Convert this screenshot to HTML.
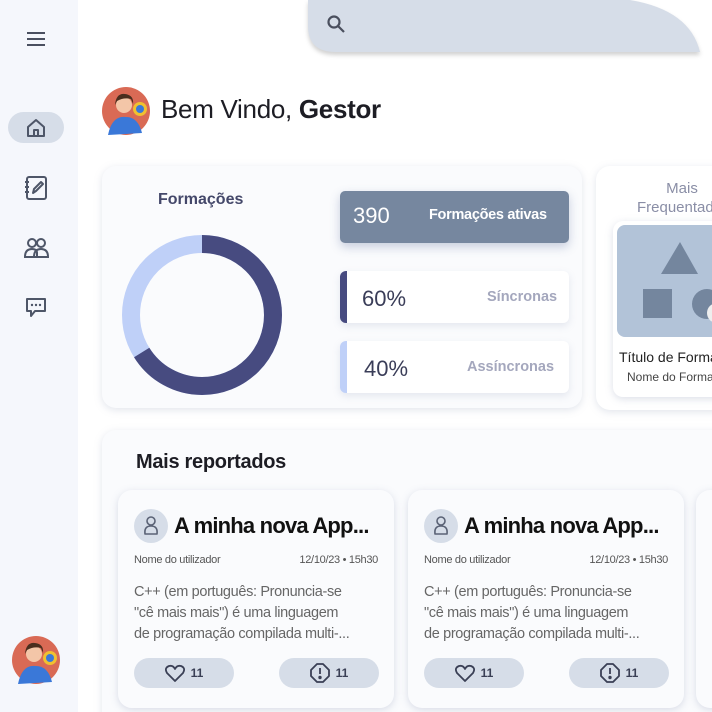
<!DOCTYPE html>
<html style="width:712px;height:712px;overflow:hidden"><head><meta charset="utf-8"><style>
*{box-sizing:border-box;margin:0;padding:0}
body{width:712px;height:712px;overflow:hidden;background:#fff;font-family:"Liberation Sans",sans-serif;position:relative}
.abs{position:absolute}
.side{left:0;top:0;width:78px;height:712px;background:#f5f7fc}
.card{background:#fafbfd;border-radius:14px;box-shadow:0 2px 8px rgba(140,150,180,.25)}
.stat{background:#fff;border-radius:6px;box-shadow:0 3px 8px rgba(140,150,180,.2);overflow:hidden}
.rc{width:276px;height:218px;background:#fafbfd;border-radius:14px;box-shadow:0 2px 8px rgba(140,150,180,.3)}
.btn{position:absolute;top:168px;width:100px;height:30px;background:#d6dde8;border-radius:15px;display:flex;align-items:center;justify-content:center;gap:6px;font-size:12px;font-weight:bold;color:#3a3f55}
.tt{position:absolute;left:56px;top:23px;font-size:22px;font-weight:bold;color:#111;white-space:nowrap;letter-spacing:-0.8px}
.bd{position:absolute;left:16px;top:92px;font-size:14.5px;color:#666;line-height:21px;white-space:nowrap;letter-spacing:-0.35px}
</style></head><body>
<div class="abs side"></div>
<svg class="abs" style="left:26px;top:31px" width="20" height="16"><g stroke="#4a5060" stroke-width="2"><line x1="1" y1="2" x2="19" y2="2"/><line x1="1" y1="8" x2="19" y2="8"/><line x1="1" y1="14" x2="19" y2="14"/></g></svg>
<div class="abs" style="left:8px;top:112px;width:56px;height:31px;background:#d6dde8;border-radius:16px"></div>
<svg class="abs" style="left:25px;top:117px" width="22" height="22" fill="none" stroke="#4e5668" stroke-width="2" stroke-linejoin="round"><path d="M3 10 L11 3 L19 10 V19 H3 Z"/><path d="M9 19 V13 H13 V19"/></svg>
<svg class="abs" style="left:24px;top:175px" width="24" height="26" fill="none" stroke="#4e5668" stroke-width="2" stroke-linejoin="round"><rect x="3" y="2" width="19" height="22" rx="2"/><path d="M1 7h4M1 12h4M1 17h4"/><path d="M9 18 L10 14 L17 7 L19 9 L12 16 Z"/></svg>
<svg class="abs" style="left:24px;top:237px" width="26" height="22" fill="none" stroke="#4e5668" stroke-width="2"><circle cx="8" cy="6" r="4"/><circle cx="17" cy="6" r="4"/><path d="M1 20 Q1 12 8 12 Q13 12 13 16 V20 Z"/><path d="M10 20 Q10 12 17 12 Q24 12 24 20 Z"/></svg>
<svg class="abs" style="left:25px;top:297px" width="22" height="22" fill="none" stroke="#4e5668" stroke-width="2" stroke-linejoin="round"><path d="M2 2 H20 V14 H10 L6 19 V14 H2 Z"/><g fill="#4e5668" stroke="none"><circle cx="7" cy="8" r="1.2"/><circle cx="11" cy="8" r="1.2"/><circle cx="15" cy="8" r="1.2"/></g></svg>
<svg class="abs" style="left:12px;top:636px" width="48" height="48"><circle cx="24" cy="24" r="24" fill="#d96a55"/><path d="M6 48 Q10 28 24 30 Q36 30 40 46 Z" fill="#3a78d8"/><circle cx="22" cy="18" r="8" fill="#f3c6a8"/><path d="M13 18 Q14 6 23 7 Q32 8 31 17 L29 12 Q22 10 15 14 Z" fill="#4a2e1e"/><circle cx="38" cy="22" r="7" fill="#f0c030"/><circle cx="38" cy="22" r="4" fill="#3a78d8"/></svg>
<svg class="abs" style="left:102px;top:87px" width="48" height="48"><circle cx="24" cy="24" r="24" fill="#d96a55"/><path d="M6 48 Q10 28 24 30 Q36 30 40 46 Z" fill="#3a78d8"/><circle cx="22" cy="18" r="8" fill="#f3c6a8"/><path d="M13 18 Q14 6 23 7 Q32 8 31 17 L29 12 Q22 10 15 14 Z" fill="#4a2e1e"/><circle cx="38" cy="22" r="7" fill="#f0c030"/><circle cx="38" cy="22" r="4" fill="#3a78d8"/></svg>
<svg class="abs" style="left:300px;top:0" width="412" height="60"><path d="M8 0 V26 Q8 52 36 52 H400 Q390 10 330 0 Z" fill="#d6dde8" style="filter:drop-shadow(0 3px 2px rgba(0,0,0,.18))"/></svg>
<svg class="abs" style="left:326px;top:14px" width="20" height="20" fill="none" stroke="#4a4f5e" stroke-width="2.2"><circle cx="8" cy="8" r="5.5"/><line x1="12" y1="12" x2="18" y2="18"/></svg>
<div class="abs" style="left:161px;top:94px;font-size:26px;color:#1d1d24;letter-spacing:-0.3px">Bem Vindo, <b>Gestor</b></div>
<div class="abs card" style="left:102px;top:166px;width:480px;height:242px"></div>
<div class="abs" style="left:158px;top:191px;font-size:16px;font-weight:bold;color:#44486a">Formações</div>
<svg class="abs" style="left:122px;top:235px" width="160" height="160"><circle cx="80" cy="80" r="71" fill="none" stroke="#bfd0f8" stroke-width="18"/><circle cx="80" cy="80" r="71" fill="none" stroke="#474b80" stroke-width="18" stroke-dasharray="295 1000" transform="rotate(-90 80 80)"/></svg>
<div class="abs" style="left:340px;top:191px;width:229px;height:52px;background:#76879f;border-radius:5px;box-shadow:0 4px 10px rgba(80,100,150,.3)"></div>
<div class="abs" style="left:353px;top:203px;font-size:22px;color:#fff">390</div>
<div class="abs" style="left:429px;top:207px;font-size:14.5px;font-weight:bold;color:#fff;letter-spacing:-0.3px">Formações ativas</div>
<div class="abs stat" style="left:340px;top:271px;width:229px;height:52px;border-left:7px solid #474b80"></div>
<div class="abs" style="left:362px;top:286px;font-size:22px;color:#3a3d58">60%</div>
<div class="abs" style="left:487px;top:289px;font-size:14.5px;font-weight:bold;color:#a4a7bd">Síncronas</div>
<div class="abs stat" style="left:340px;top:341px;width:229px;height:52px;border-left:7px solid #bfd0f8"></div>
<div class="abs" style="left:364px;top:356px;font-size:22px;color:#3a3d58">40%</div>
<div class="abs" style="left:467px;top:359px;font-size:14.5px;font-weight:bold;color:#a4a7bd">Assíncronas</div>
<div class="abs card" style="left:596px;top:166px;width:140px;height:244px;background:#fff"></div>
<div class="abs" style="left:637px;top:179px;width:90px;text-align:center;font-size:15px;color:#8a8ea6;line-height:19px">Mais<br>Frequentados</div>
<div class="abs" style="left:613px;top:221px;width:120px;height:176px;background:#fff;border-radius:10px;box-shadow:0 2px 8px rgba(140,150,180,.3)"></div>
<div class="abs" style="left:617px;top:225px;width:110px;height:112px;background:#b2c3d8;border-radius:8px"></div>
<svg class="abs" style="left:617px;top:225px" width="95" height="112"><polygon points="63,17 81,49 44,49" fill="#74869e"/><rect x="26" y="64" width="29" height="29" fill="#74869e"/><circle cx="90" cy="79" r="15" fill="#74869e"/><circle cx="100" cy="88" r="10" fill="#eee"/></svg>
<div class="abs" style="left:619px;top:349px;font-size:14px;color:#222;white-space:nowrap">Título de Formação</div>
<div class="abs" style="left:627px;top:370px;font-size:12px;color:#444;white-space:nowrap">Nome do Formador</div>
<div class="abs card" style="left:102px;top:430px;width:640px;height:300px"></div>
<div class="abs" style="left:136px;top:451px;font-size:20px;font-weight:bold;color:#1d1d24;letter-spacing:-0.3px">Mais reportados</div>
<div class="abs" style="left:696px;top:490px;width:60px;height:218px;background:#fafbfd;border-radius:14px;box-shadow:0 2px 8px rgba(140,150,180,.3)"></div>

<div class="abs rc" style="left:118px;top:490px">
<div class="abs" style="left:16px;top:19px;width:34px;height:34px;border-radius:17px;background:#d6dde8"></div>
<svg class="abs" style="left:24px;top:25px" width="18" height="22" fill="none" stroke="#5a6275" stroke-width="1.6"><circle cx="9" cy="6" r="4"/><path d="M3 19 Q2 11 9 11 Q16 11 15 19 Z" stroke-linejoin="round"/></svg>
<div class="tt">A minha nova App...</div>
<div class="abs" style="left:16px;top:64px;font-size:11px;color:#555;letter-spacing:-0.3px">Nome do utilizador</div>
<div class="abs" style="right:16px;top:64px;font-size:11px;color:#555;letter-spacing:-0.3px">12/10/23 • 15h30</div>
<div class="bd">C++ (em português: Pronuncia-se<br>"cê mais mais") é uma linguagem<br>de programação compilada multi-...</div>
<div class="btn" style="left:16px"><svg width="20" height="18" fill="none" stroke="#3a3f55" stroke-width="1.8"><path d="M10 17 L2 9 Q-1 4 4 2 Q8 1 10 5 Q12 1 16 2 Q21 4 18 9 Z" stroke-linejoin="round"/></svg>11</div>
<div class="btn" style="left:161px"><svg width="20" height="20" fill="none" stroke="#3a3f55" stroke-width="1.8"><polygon points="7,1 13,1 19,7 19,13 13,19 7,19 1,13 1,7" stroke-linejoin="round"/><line x1="10" y1="5" x2="10" y2="11"/><circle cx="10" cy="14.5" r=".8" fill="#3a3f55"/></svg>11</div>
</div>
<div class="abs rc" style="left:408px;top:490px">
<div class="abs" style="left:16px;top:19px;width:34px;height:34px;border-radius:17px;background:#d6dde8"></div>
<svg class="abs" style="left:24px;top:25px" width="18" height="22" fill="none" stroke="#5a6275" stroke-width="1.6"><circle cx="9" cy="6" r="4"/><path d="M3 19 Q2 11 9 11 Q16 11 15 19 Z" stroke-linejoin="round"/></svg>
<div class="tt">A minha nova App...</div>
<div class="abs" style="left:16px;top:64px;font-size:11px;color:#555;letter-spacing:-0.3px">Nome do utilizador</div>
<div class="abs" style="right:16px;top:64px;font-size:11px;color:#555;letter-spacing:-0.3px">12/10/23 • 15h30</div>
<div class="bd">C++ (em português: Pronuncia-se<br>"cê mais mais") é uma linguagem<br>de programação compilada multi-...</div>
<div class="btn" style="left:16px"><svg width="20" height="18" fill="none" stroke="#3a3f55" stroke-width="1.8"><path d="M10 17 L2 9 Q-1 4 4 2 Q8 1 10 5 Q12 1 16 2 Q21 4 18 9 Z" stroke-linejoin="round"/></svg>11</div>
<div class="btn" style="left:161px"><svg width="20" height="20" fill="none" stroke="#3a3f55" stroke-width="1.8"><polygon points="7,1 13,1 19,7 19,13 13,19 7,19 1,13 1,7" stroke-linejoin="round"/><line x1="10" y1="5" x2="10" y2="11"/><circle cx="10" cy="14.5" r=".8" fill="#3a3f55"/></svg>11</div>
</div>
</body></html>
